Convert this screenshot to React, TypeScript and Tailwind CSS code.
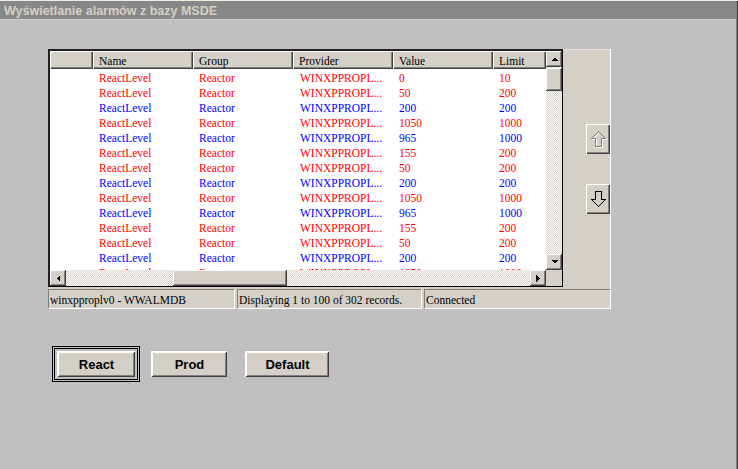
import React from 'react';

// dane do siatki: [value, limit, kolor]
const rows: [string, string, 'r' | 'b'][] = [
  ['0', '10', 'r'],
  ['50', '200', 'r'],
  ['200', '200', 'b'],
  ['1050', '1000', 'r'],
  ['965', '1000', 'b'],
  ['155', '200', 'r'],
  ['50', '200', 'r'],
  ['200', '200', 'b'],
  ['1050', '1000', 'r'],
  ['965', '1000', 'b'],
  ['155', '200', 'r'],
  ['50', '200', 'r'],
  ['200', '200', 'b'],
  ['1050', '1000', 'r'],
];

const bevel = 'bg-[#d4d0c8] shadow-[inset_-1px_-1px_#404040,inset_1px_1px_#ffffff,inset_-2px_-2px_#808080]';
const dither = 'bg-[repeating-conic-gradient(#d4d0c8_0%_25%,#ffffff_0%_50%)] bg-[length:2px_2px]';
const serif = "font-['Liberation_Serif',serif] text-[11.5px]";

function Tri({ dir }: { dir: 'up' | 'down' | 'left' | 'right' }) {
  const pts = {
    up: '0,4 7,4 3.5,0.5',
    down: '0,0 7,0 3.5,3.5',
    left: '4,0 4,7 0.5,3.5',
    right: '0,0 0,7 3.5,3.5',
  }[dir];
  const vert = dir === 'up' || dir === 'down';
  return (
    <svg width={vert ? 7 : 4} height={vert ? 4 : 7} shapeRendering="crispEdges">
      <polygon points={pts} fill="#000" />
    </svg>
  );
}

function ScrollBtn({ dir }: { dir: 'up' | 'down' | 'left' | 'right' }) {
  return (
    <div className={`w-[16px] h-[16px] shrink-0 flex items-center justify-center ${bevel}`}>
      <Tri dir={dir} />
    </div>
  );
}

function BigArrow({ down, disabled }: { down?: boolean; disabled?: boolean }) {
  const pts = down
    ? '7.5,15.5 14.5,8.5 10.5,8.5 10.5,0.5 4.5,0.5 4.5,8.5 0.5,8.5'
    : '7.5,0.5 14.5,7.5 10.5,7.5 10.5,15.5 4.5,15.5 4.5,7.5 0.5,7.5';
  return (
    <svg width="16" height="17" shapeRendering="crispEdges">
      {disabled && <polygon points={pts} fill="none" stroke="#ffffff" transform="translate(1,1)" />}
      <polygon points={pts} fill="none" stroke={disabled ? '#808080' : '#000'} />
    </svg>
  );
}

function Header({ w, label }: { w: string; label?: string }) {
  return (
    <div
      className={`${w} shrink-0 h-[18px] pl-[6px] pt-[3px] leading-[14px] text-black bg-[#d4d0c8] shadow-[inset_1px_1px_#ffffff,inset_-1px_-1px_#404040,inset_-2px_-2px_#808080]`}
    >
      {label}
    </div>
  );
}

function Grid() {
  return (
    <div className="w-[515px] h-[238px] shrink-0 bg-white border-t-2 border-l-2 border-t-[#202020] border-l-[#202020] border-r border-b border-r-black border-b-black grid grid-cols-[496px_16px] grid-rows-[219px_16px]">
      <div className={`overflow-hidden ${serif}`}>
        <div className="flex">
          <Header w="w-[43px]" />
          <Header w="w-[100px]" label="Name" />
          <Header w="w-[100px]" label="Group" />
          <Header w="w-[100px]" label="Provider" />
          <Header w="w-[100px]" label="Value" />
          <Header w="w-[53px]" label="Limit" />
        </div>
        {rows.map(([v, l, c], i) => (
          <div key={i} className={`flex h-[15px] pt-[2px] leading-[15px] ${c === 'r' ? 'text-[#ff0000]' : 'text-[#0000ff]'}`}>
            <div className="w-[43px] shrink-0" />
            <div className="w-[100px] shrink-0 pl-[6px]">ReactLevel</div>
            <div className="w-[100px] shrink-0 pl-[6px]">Reactor</div>
            <div className="w-[100px] shrink-0 pl-[7px] whitespace-nowrap">WINXPPROPL...</div>
            <div className="w-[100px] shrink-0 pl-[6px]">{v}</div>
            <div className="w-[53px] shrink-0 pl-[6px]">{l}</div>
          </div>
        ))}
      </div>
      <div className={`flex flex-col ${dither}`}>
        <ScrollBtn dir="up" />
        <div className={`w-[16px] h-[23px] mt-[1px] ${bevel}`} />
        <div className="flex-1" />
        <ScrollBtn dir="down" />
      </div>
      <div className={`flex ${dither}`}>
        <ScrollBtn dir="left" />
        <div className="w-[107px]" />
        <div className={`w-[114px] h-[16px] ${bevel}`} />
        <div className="flex-1" />
        <ScrollBtn dir="right" />
      </div>
      <div className="bg-[#d4d0c8]" />
    </div>
  );
}

function Status({ w, text }: { w: string; text: string }) {
  return (
    <div
      className={`${w} h-[20px] pl-[1px] pt-[2px] leading-[16px] border border-t-[#808080] border-l-[#808080] border-r-white border-b-white text-black whitespace-nowrap overflow-hidden ${serif}`}
    >
      {text}
    </div>
  );
}

function WinButton({ label, w }: { label: string; w: string }) {
  return (
    <div
      className={`${w} h-[26px] flex items-center justify-center text-[13px] font-bold text-black font-['Liberation_Sans',Arial,sans-serif] border-t border-l border-t-white border-l-white ${bevel}`}
    >
      {label}
    </div>
  );
}

export default function App() {
  return (
    <div className="w-[738px] h-[469px] bg-[#c0c0c0] flex flex-col border-t border-t-[#f0eee0] shadow-[inset_-1px_0_#404040,inset_-2px_0_#808080] overflow-hidden">
      <div className="h-[19px] shrink-0 bg-[#878787] border-b border-b-[#d0d0d0] pl-[4px] leading-[21px] text-[12.5px] font-bold text-[#d4d0c8] font-['Liberation_Sans',Arial,sans-serif] mr-[2px]">
        Wyświetlanie alarmów z bazy MSDE
      </div>

      <div className="ml-[48px] mt-[29px] w-[563px] bg-[#d4d0c8] border-r border-r-white flex flex-col">
        <div className="flex">
          <Grid />
          <div className="flex-1 border-t border-t-[#e4e4e4] flex flex-col items-end">
            <div className="mt-[74px] w-[24px] h-[30px] flex items-center justify-center bg-[#d4d0c8] border-t border-l border-t-white border-l-white shadow-[inset_-1px_-1px_#404040,inset_-2px_-2px_#808080]">
              <BigArrow disabled />
            </div>
            <div className="mt-[30px] w-[24px] h-[30px] flex items-center justify-center bg-[#d4d0c8] border-t border-l border-t-white border-l-white shadow-[inset_-1px_-1px_#404040,inset_-2px_-2px_#808080]">
              <BigArrow down />
            </div>
          </div>
        </div>
        <div className="flex gap-[2px] mt-[2px] -mr-[1px]">
          <Status w="w-[187px]" text="winxpproplv0 - WWALMDB" />
          <Status w="w-[185px]" text="Displaying 1 to 100 of 302 records." />
          <Status w="w-[187px]" text="Connected" />
        </div>
      </div>

      <div className="flex items-center ml-[52px] mt-[37px]">
        <div className="border border-black p-[1px]">
          <div className="border border-black p-[2px]">
            <WinButton label="React" w="w-[78px]" />
          </div>
        </div>
        <div className="ml-[11px]">
          <WinButton label="Prod" w="w-[76px]" />
        </div>
        <div className="ml-[18px]">
          <WinButton label="Default" w="w-[84px]" />
        </div>
      </div>
    </div>
  );
}
